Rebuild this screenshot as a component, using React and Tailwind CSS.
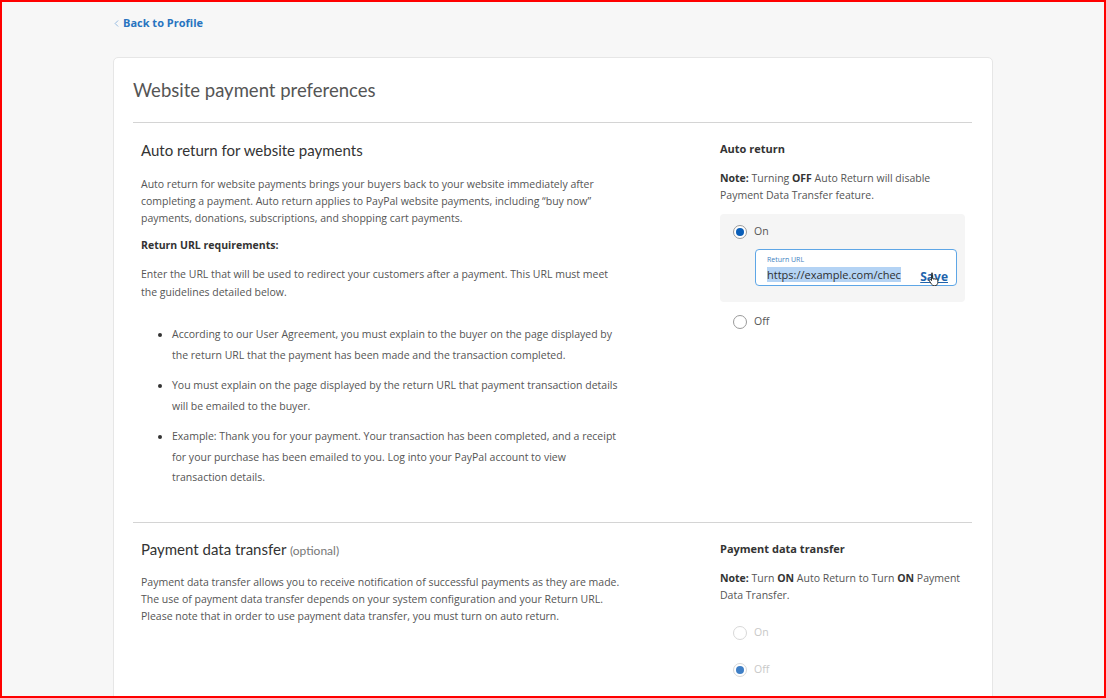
import React from "react";
import { ChevronLeft } from "lucide-react";

const Radio = ({ checked, faded }) => (
  <span
    className={`w-[14px] h-[14px] rounded-full border bg-white flex items-center justify-center shrink-0 ${
      faded ? "border-[#d8d8d8]" : "border-[#9a9a9a]"
    }`}
  >
    {checked && (
      <span
        className={`w-[8px] h-[8px] rounded-full ${faded ? "bg-[#3f7fc6]" : "bg-[#0a5eb8]"}`}
      />
    )}
  </span>
);

const Hand = () => (
  <svg width="12" height="14" viewBox="0 0 12 14" className="absolute left-[172px] top-[22px]">
    <path
      d="M3.5 1.2c.6 0 1 .4 1 1v4.3l.4-.1c.6 0 1 .4 1 1 .1-.5.5-.8 1-.8s.9.4 1 .9c.2-.4.5-.6.9-.6.6 0 1 .4 1 1v2.7c0 1.7-1.2 3.1-3 3.1H6c-1 0-1.8-.5-2.3-1.3L1.4 8.9c-.3-.5-.1-1.1.4-1.3.4-.2.9 0 1.2.3l.5.7V2.2c0-.6.4-1 1-1z"
      fill="#fff"
      stroke="#222"
      strokeWidth="0.9"
    />
  </svg>
);

const heading = { fontFamily: "Lato, 'Open Sans', sans-serif" };

export default function App() {
  return (
    <div
      className="w-full h-screen overflow-hidden bg-[#f7f7f7] border-2 border-[#ff0000] text-[#2c2e2f]"
      style={{ fontFamily: "'Open Sans', 'Noto Sans', sans-serif" }}
    >
      <div className="w-[880px] mx-auto">
        {/* back link */}
        <a
          href="#"
          className="flex items-start gap-[1px] pt-[13px] h-[55px] text-[11px] font-bold text-[#2874c0] -ml-px"
        >
          <ChevronLeft size={11} strokeWidth={1.5} color="#6a9fd6" className="mt-[3px] -ml-[1px]" />
          <span className="leading-[16px]">Back to Profile</span>
        </a>

        {/* card */}
        <div className="bg-white border border-[#e6e6e6] rounded-[5px] pl-[19px] pr-5 pt-[18px] pb-10 min-h-[700px]">
          <h1
            className="text-[18.5px] leading-[28px] text-[#555] font-normal pb-[18px] border-b border-[#d4d4d4]"
            style={heading}
          >
            Website payment preferences
          </h1>

          {/* auto return */}
          <div className="flex pt-[16px] pb-[34px] border-b border-[#d4d4d4]">
            <div className="w-[587px] pl-2">
              <h2 className="text-[15px] leading-[22px] text-[#333]" style={heading}>
                Auto return for website payments
              </h2>
              <p className="mt-[15px] text-[10.5px] leading-[17px] text-[#555]">
                Auto return for website payments brings your buyers back to your website immediately after
                <br />
                completing a payment. Auto return applies to PayPal website payments, including “buy now”
                <br />
                payments, donations, subscriptions, and shopping cart payments.
              </p>
              <p className="mt-[9px] text-[10.5px] leading-[18px] font-bold text-[#333]">
                Return URL requirements:
              </p>
              <p className="mt-[11px] text-[10.5px] leading-[18px] text-[#555]">
                Enter the URL that will be used to redirect your customers after a payment. This URL must meet
                <br />
                the guidelines detailed below.
              </p>
              <ul className="mt-[23px] pl-[31px] list-disc marker:text-[#333] text-[10.5px] leading-[20.5px] text-[#555] flex flex-col gap-[10px]">
                <li>
                  According to our User Agreement, you must explain to the buyer on the page displayed by
                  <br />
                  the return URL that the payment has been made and the transaction completed.
                </li>
                <li>
                  You must explain on the page displayed by the return URL that payment transaction details
                  <br />
                  will be emailed to the buyer.
                </li>
                <li>
                  Example: Thank you for your payment. Your transaction has been completed, and a receipt
                  <br />
                  for your purchase has been emailed to you. Log into your PayPal account to view
                  <br />
                  transaction details.
                </li>
              </ul>
            </div>

            <div className="w-[245px]">
              <h3 className="text-[11px] leading-[18px] font-bold text-[#333] mt-[1px]">Auto return</h3>
              <p className="mt-[12px] text-[10.5px] leading-[17px] text-[#555]">
                <b className="text-[#333]">Note:</b> Turning <b className="text-[#333]">OFF</b> Auto Return will disable
                <br />
                Payment Data Transfer feature.
              </p>
              <div className="mt-[10px] bg-[#f5f5f5] rounded-[4px] pt-[11px] pb-[16px] pl-[13px] pr-[8px]">
                <label className="flex items-center gap-[7px] text-[10.5px] text-[#555] h-[14px]">
                  <Radio checked />
                  <span>On</span>
                </label>
                <div className="relative mt-[10px] ml-[22px] h-[37px] border border-[#5ea6e6] rounded-[4px] bg-white pl-[11px] pt-[5px]">
                  <div className="text-[7px] leading-[9px] text-[#3d7fc0]">Return URL</div>
                  <div className="flex items-center justify-between pr-[8px]">
                    <span className="text-[11px] leading-[15px] text-[#2c2e2f] bg-[#b4d3f4]">https://example.com/chec</span>
                    <span className="text-[12px] leading-[15px] font-bold text-[#2063ab] underline mt-[5px]">Save</span>
                  </div>
                  <Hand />
                </div>
              </div>
              <label className="mt-[12px] flex items-center gap-[7px] text-[10.5px] text-[#555] pl-[13px]">
                <Radio />
                <span>Off</span>
              </label>
            </div>
          </div>

          {/* payment data transfer */}
          <div className="flex pt-[17px]">
            <div className="w-[587px] pl-2">
              <h2 className="text-[15px] leading-[22px] text-[#333] -mt-[2px]" style={heading}>
                Payment data transfer <span className="text-[12px] text-[#777]">(optional)</span>
              </h2>
              <p className="mt-[12px] text-[10.5px] leading-[17px] text-[#555]">
                Payment data transfer allows you to receive notification of successful payments as they are made.
                <br />
                The use of payment data transfer depends on your system configuration and your Return URL.
                <br />
                Please note that in order to use payment data transfer, you must turn on auto return.
              </p>
            </div>
            <div className="w-[245px]">
              <h3 className="text-[11px] leading-[18px] font-bold text-[#333]">Payment data transfer</h3>
              <p className="mt-[12px] text-[10.5px] leading-[17px] text-[#555]">
                <b className="text-[#333]">Note:</b> Turn <b className="text-[#333]">ON</b> Auto Return to Turn{" "}
                <b className="text-[#333]">ON</b> Payment
                <br />
                Data Transfer.
              </p>
              <label className="mt-[22px] flex items-center gap-[7px] text-[10.5px] text-[#c8c8c8] pl-[13px] h-[14px]">
                <Radio faded />
                <span>On</span>
              </label>
              <label className="mt-[23px] flex items-center gap-[7px] text-[10.5px] text-[#c8c8c8] pl-[13px] h-[14px]">
                <Radio checked faded />
                <span>Off</span>
              </label>
            </div>
          </div>
        </div>
      </div>
    </div>
  );
}
